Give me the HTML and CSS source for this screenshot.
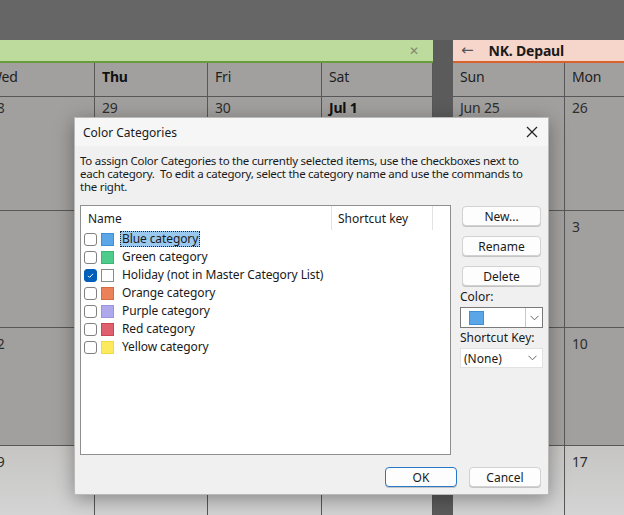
FILE: index.html
```html
<!DOCTYPE html>
<html>
<head>
<meta charset="utf-8">
<link rel="stylesheet" href="styles.css">
</head>
<body>
<div class="screen">
  <div class="panes">
    <section class="pane pane-left">
      <div class="pane-head head-green"><span class="head-close">✕</span></div>
      <div class="grid grid-left">
        <div class="cell hd">Wed</div><div class="cell hd b">Thu</div><div class="cell hd">Fri</div><div class="cell hd">Sat</div>
        <div class="cell r1">28</div><div class="cell r1">29</div><div class="cell r1">30</div><div class="cell r1 b">Jul 1</div>
        <div class="cell">5</div><div class="cell">6</div><div class="cell">7</div><div class="cell">8</div>
        <div class="cell">12</div><div class="cell">13</div><div class="cell">14</div><div class="cell">15</div>
        <div class="cell light">19</div><div class="cell light">20</div><div class="cell light">21</div><div class="cell light">22</div>
      </div>
    </section>
    <section class="pane pane-right">
      <div class="pane-head head-pink"><span class="head-arrow">←</span><span class="head-title">NK. Depaul</span></div>
      <div class="grid grid-right">
        <div class="cell hd">Sun</div><div class="cell hd">Mon</div>
        <div class="cell r1">Jun 25</div><div class="cell r1">26</div>
        <div class="cell">2</div><div class="cell">3</div>
        <div class="cell">9</div><div class="cell">10</div>
        <div class="cell light">16</div><div class="cell light">17</div>
      </div>
    </section>
  </div>

  <div class="dialog">
    <div class="titlebar">
      <span class="title">Color Categories</span>
      <svg class="title-close" width="12" height="12" viewBox="0 0 12 12"><path d="M1 1L11 11M11 1L1 11" stroke="#222" stroke-width="1.2" fill="none"/></svg>
    </div>
    <div class="dlg-body">
      <p class="desc">To assign Color Categories to the currently selected items, use the checkboxes next to each category.&nbsp; To edit a category, select the category name and use the commands to the right.</p>
      <div class="main">
        <div class="listbox">
          <div class="list-head">
            <div class="col-name">Name</div>
            <div class="col-key">Shortcut key</div>
            <div class="col-rest"></div>
          </div>
          <div class="row"><span class="chk"></span><span class="sw sw-blue"></span><span class="lbl sel">Blue category</span></div>
          <div class="row"><span class="chk"></span><span class="sw sw-green"></span><span class="lbl">Green category</span></div>
          <div class="row"><span class="chk on"><svg width="13" height="13" viewBox="0 0 13 13"><path d="M4 6.8L5.6 8.4L9 4.8" stroke="#fff" stroke-width="1" fill="none"/></svg></span><span class="sw sw-white"></span><span class="lbl">Holiday (not in Master Category List)</span></div>
          <div class="row"><span class="chk"></span><span class="sw sw-orange"></span><span class="lbl">Orange category</span></div>
          <div class="row"><span class="chk"></span><span class="sw sw-purple"></span><span class="lbl">Purple category</span></div>
          <div class="row"><span class="chk"></span><span class="sw sw-red"></span><span class="lbl">Red category</span></div>
          <div class="row"><span class="chk"></span><span class="sw sw-yellow"></span><span class="lbl">Yellow category</span></div>
        </div>
        <div class="side">
          <button class="btn side-btn">New...</button>
          <button class="btn side-btn">Rename</button>
          <button class="btn side-btn">Delete</button>
          <div class="field-label">Color:</div>
          <div class="combo combo-color">
            <div class="combo-val"><span class="sw sw-blue big"></span></div>
            <div class="combo-drop"><svg width="9" height="6" viewBox="0 0 9 6"><path d="M0.5 0.8L4.5 4.8L8.5 0.8" stroke="#666" stroke-width="1" fill="none"/></svg></div>
          </div>
          <div class="field-label key-label">Shortcut Key:</div>
          <div class="combo combo-key">
            <span class="combo-text">(None)</span>
            <svg width="9" height="6" viewBox="0 0 9 6"><path d="M0.5 0.8L4.5 4.8L8.5 0.8" stroke="#666" stroke-width="1" fill="none"/></svg>
          </div>
        </div>
      </div>
      <div class="footer">
        <button class="btn foot-btn primary">OK</button>
        <button class="btn foot-btn">Cancel</button>
      </div>
    </div>
  </div>
</div>
</body>
</html>
```
FILE: styles.css
```css
html, body {
  margin: 0;
  padding: 0;
}
body {
  width: 624px;
  height: 515px;
  overflow: hidden;
  background: #666666;
}
.screen {
  position: relative;
  width: 624px;
  height: 515px;
  overflow: hidden;
  background: #666666;
  font-family: "Noto Sans", "Liberation Sans", sans-serif;
}
.panes {
  display: flex;
  gap: 20px;
  margin-top: 40px;
  height: 475px;
  background: #5b5b5b;
}
.pane {
  display: flex;
  flex-direction: column;
}
.pane-left {
  width: 451px;
  margin-left: -18px;
  flex: none;
}
.pane-right {
  flex: 1;
}
.pane-head {
  height: 23px;
  box-sizing: border-box;
  display: flex;
  align-items: center;
}
.head-green {
  background: #bddb9c;
  border-bottom: 2px solid #6a9c3e;
  justify-content: flex-end;
  padding-right: 14px;
}
.head-close {
  color: #7d8a72;
  font-size: 12px;
  font-family: "DejaVu Sans", sans-serif;
}
.head-pink {
  background: #f6d6ca;
  border-bottom: 2px solid #d8612e;
  padding-left: 8px;
  gap: 15px;
}
.head-arrow {
  font-size: 15px;
  color: #555;
  font-family: "DejaVu Sans", sans-serif;
  line-height: 1;
}
.head-title {
  font-weight: bold;
  font-size: 14px;
  color: #1a1a1a;
  letter-spacing: -0.2px;
}
.grid {
  display: grid;
  flex: 1;
  grid-template-rows: 34px 114px 117px 118px 1fr;
  background: #a2a09e;
}
.grid-left {
  grid-template-columns: 113px 113px 114px 111px;
}
.grid-right {
  grid-template-columns: 112px 1fr;
}
.cell {
  box-sizing: border-box;
  border-right: 1px solid #575757;
  border-bottom: 1px solid #575757;
  padding: 6px 7px 0;
  font-size: 14px;
  line-height: 20px;
  color: #2e2e2e;
  letter-spacing: -0.2px;
}
.cell.hd {
  padding-top: 4px;
  color: #1e1e1e;
}
.cell.r1 {
  padding-top: 1px;
}
.cell.b {
  font-weight: bold;
  color: #111;
}
.cell.light {
  background: linear-gradient(#c6c5c4, #d4d4d4);
  border-bottom: none;
}
.grid-right .cell:nth-child(2n) {
  border-right: none;
}

/* dialog */
.dialog {
  position: absolute;
  left: 74px;
  top: 117px;
  width: 475px;
  height: 378px;
  box-sizing: border-box;
  background: #f0f0f0;
  border: 1px solid #b9b9b9;
  box-shadow: 0 4px 18px rgba(0, 0, 0, 0.35);
  display: flex;
  flex-direction: column;
  font-size: 12px;
  color: #1a1a1a;
}
.titlebar {
  height: 28px;
  background: #f6f6f6;
  display: flex;
  align-items: center;
  justify-content: space-between;
  padding: 0 10px 0 8px;
  flex: none;
}
.title {
  font-size: 12px;
  color: #1a1a1a;
}
.dlg-body {
  flex: 1;
  display: flex;
  flex-direction: column;
  padding: 8px 6px 0 5px;
}
.desc {
  margin: 0;
  line-height: 13px;
  font-size: 11.5px;
  letter-spacing: -0.27px;
}
.main {
  display: flex;
  gap: 9px;
  margin-top: 12px;
}
.listbox {
  width: 371px;
  height: 250px;
  box-sizing: border-box;
  background: #fff;
  border: 1px solid #8f8f8f;
  flex: none;
}
.list-head {
  height: 24px;
  display: flex;
}
.col-name {
  box-sizing: border-box;
  width: 251px;
  padding-left: 7px;
  border-right: 1px solid #e3e3e3;
  line-height: 25px;
}
.col-key {
  box-sizing: border-box;
  width: 101px;
  padding-left: 6px;
  border-right: 1px solid #e3e3e3;
  line-height: 25px;
}
.row {
  height: 18px;
  display: flex;
  align-items: center;
  padding-left: 3px;
}
.chk {
  width: 13px;
  height: 13px;
  box-sizing: border-box;
  border: 1px solid #808080;
  border-radius: 3px;
  background: #fff;
  flex: none;
  display: flex;
}
.chk.on {
  background: #005fb8;
  border-color: #005fb8;
}
.chk svg {
  margin: -1px;
}
.sw {
  width: 13px;
  height: 13px;
  box-sizing: border-box;
  margin-left: 4px;
  flex: none;
  border: 1px solid;
}
.sw-blue { background: #5aa6e6; border-color: #3f8fd6; }
.sw-green { background: #4fcc8b; border-color: #3bb775; }
.sw-white { background: #fff; border-color: #8a8a8a; }
.sw-orange { background: #ea8158; border-color: #d96a40; }
.sw-purple { background: #b0a8ec; border-color: #9c93e0; }
.sw-red { background: #de5f6d; border-color: #cc4656; }
.sw-yellow { background: #fde95c; border-color: #f2da45; }
.lbl {
  margin-left: 6px;
  line-height: 14px;
  padding: 0 1px;
  white-space: nowrap;
  border: 1px solid transparent;
  letter-spacing: -0.1px;
}
.lbl.sel {
  background: #99c9ef;
  border: 1px dotted #222;
}
.side {
  width: 83px;
  display: flex;
  flex-direction: column;
}
.btn {
  font-family: inherit;
  font-size: 12px;
  color: #1a1a1a;
  background: #fdfdfd;
  border: 1px solid #d2d2d2;
  border-radius: 4px;
  padding: 0;
  height: 20px;
  box-shadow: 0 1px 0 #c4c4c4;
}
.side-btn {
  width: 79px;
  margin-left: 2px;
  margin-top: 10px;
}
.side-btn:first-child {
  margin-top: 1px;
}
.field-label {
  margin-top: 4px;
  line-height: 14px;
}
.field-label.key-label {
  margin-top: 3px;
}
.combo {
  width: 83px;
  height: 21px;
  box-sizing: border-box;
  background: #fff;
  display: flex;
  align-items: center;
  margin-top: 3px;
}
.combo-color {
  border: 1px solid #7a7a7a;
}
.combo-val {
  flex: 1;
  padding-left: 8px;
  display: flex;
}
.sw.big {
  width: 15px;
  height: 14px;
  margin: 0;
}
.combo-drop {
  width: 16px;
  height: 19px;
  border-left: 1px solid #c8c8c8;
  display: flex;
  align-items: center;
  justify-content: center;
}
.combo-key {
  border: 1px solid #e2e2e2;
  height: 20px;
  padding: 0 5px 0 3px;
  justify-content: space-between;
}
.footer {
  display: flex;
  justify-content: flex-end;
  gap: 12px;
  margin-top: 12px;
  padding-right: 1px;
}
.foot-btn {
  width: 72px;
  height: 20px;
}
.primary {
  border: 1.5px solid #2878c8;
}
```
